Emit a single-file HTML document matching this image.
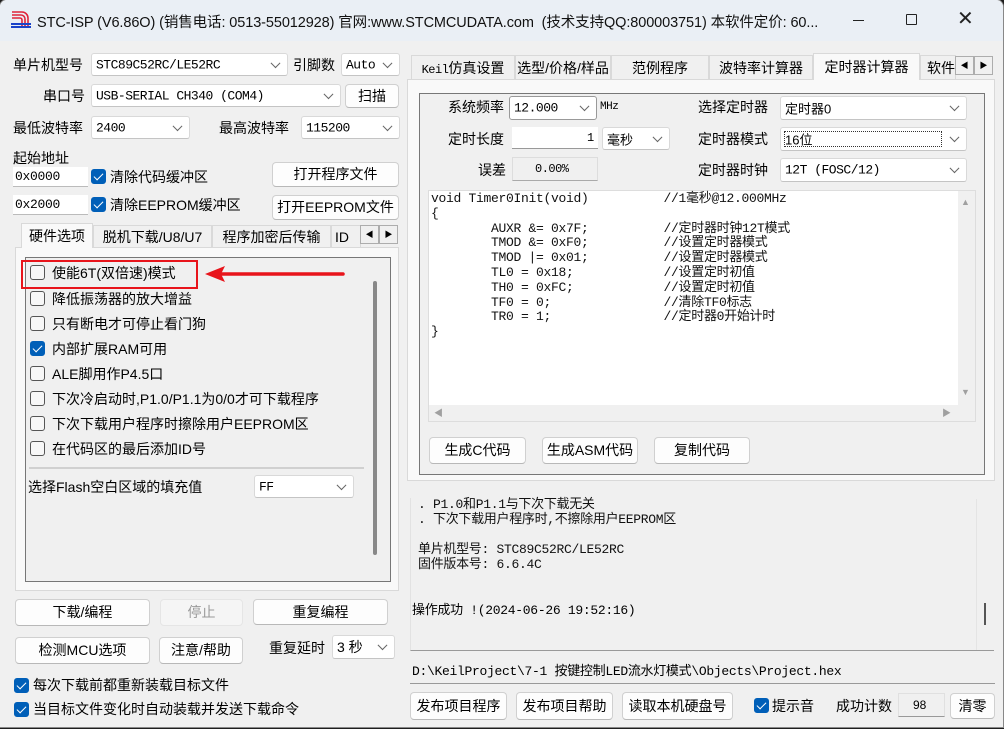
<!DOCTYPE html>
<html><head><meta charset="utf-8"><style>
*{box-sizing:border-box;margin:0;padding:0}
body{width:1004px;height:729px;background:#1e1e1e;position:relative;overflow:hidden;font-family:"Liberation Sans","Noto Sans CJK SC",sans-serif;font-size:14px;color:#000}
.win{position:absolute;left:-1px;top:-1px;width:1005px;height:729px;background:#f0f0f0;border:1px solid #888;border-radius:8px 8px 0 0;overflow:hidden}
.a{position:absolute;white-space:nowrap}
pre.a{white-space:pre}
.t{position:absolute;white-space:nowrap;line-height:16px}
.m{font-family:"Liberation Mono","Noto Sans CJK SC",monospace;font-size:12px;letter-spacing:-0.5px}
.m2{font-family:"Liberation Mono","Noto Sans CJK SC",monospace;font-size:13px;letter-spacing:-0.3px}
.cb{position:absolute;background:#fff;border:1px solid #d9d9d9;border-radius:3px;border-bottom-color:#c4c4c4}
.cb .v{position:absolute;left:4px;top:50%;transform:translateY(-50%);font-size:13px}
.cb .dd{position:absolute;right:8px;top:50%;width:7px;height:7px;border-right:1px solid #666;border-bottom:1px solid #666;transform:translateY(-75%) rotate(45deg)}
.btn{position:absolute;background:#fdfdfd;border:1px solid #d0d0d0;border-bottom-color:#b8b8b8;border-radius:4px;text-align:center;font-size:14px}
.chk{position:absolute;width:15px;height:15px;border:1px solid #555;border-radius:3px;background:#f7f7f7}
.chk.on{background:#005fb8;border-color:#005fb8}
.chk.on:after{content:"";position:absolute;left:4px;top:1px;width:4px;height:8px;border-right:1.5px solid #fff;border-bottom:1.5px solid #fff;transform:rotate(45deg)}
.tab{position:absolute;background:#f0f0f0;border:1px solid #d9d9d9;border-bottom:none;text-align:center;font-size:14px;line-height:24px}
.tab.act{background:#f9f9f9;z-index:2}
.arr{position:absolute;width:19px;height:19px;background:#f0f0f0;border:1px solid #adadad;font-size:8px;text-align:center;line-height:17px}
</style></head><body>
<div class="win">
<div class="a" style="left:0;top:0;width:1005px;height:41px;background:#eaeff5"></div>
<svg class="a" style="left:10px;top:9px" width="22" height="20" viewBox="0 0 22 20"><path d="M2 3h10a6 6 0 0 1 6 6v9M2 6h9a4 4 0 0 1 4 4v8M2 9h8a2 2 0 0 1 2 2v7" stroke="#e0233a" stroke-width="1.6" fill="none"/><path d="M1 15h20M1 18h20" stroke="#1b43c9" stroke-width="2"/></svg>
<div class="a" style="left:37px;top:11px;font-size:14.5px;color:#111;letter-spacing:-0.1px">STC-ISP (V6.86O) (销售电话: 0513-55012928) 官网:www.STCMCUDATA.com &nbsp;(技术支持QQ:800003751) 本软件定价: 60...</div>
<div class="a" style="left:853px;top:20px;width:11px;height:1px;background:#222"></div>
<div class="a" style="left:906px;top:14px;width:11px;height:11px;border:1px solid #222;border-radius:1px"></div>
<div class="a" style="left:957px;top:7px;font-size:20px;color:#222;line-height:24px">✕</div>

<!-- LEFT -->
<div class="t" style="left:13px;top:57px">单片机型号</div>
<div class="cb" style="left:91px;top:53px;width:197px;height:23px"><span class="v m">STC89C52RC/LE52RC</span><span class="dd"></span></div>
<div class="t" style="left:293px;top:57px">引脚数</div>
<div class="cb" style="left:341px;top:53px;width:59px;height:23px"><span class="v m">Auto</span><span class="dd"></span></div>
<div class="t" style="left:43px;top:88px">串口号</div>
<div class="cb" style="left:91px;top:84px;width:250px;height:23px"><span class="v m">USB-SERIAL CH340 (COM4)</span><span class="dd"></span></div>
<div class="btn" style="left:345px;top:84px;width:54px;height:24px;line-height:22px">扫描</div>
<div class="t" style="left:13px;top:120px">最低波特率</div>
<div class="cb" style="left:91px;top:116px;width:99px;height:23px"><span class="v m">2400</span><span class="dd"></span></div>
<div class="t" style="left:219px;top:120px">最高波特率</div>
<div class="cb" style="left:301px;top:116px;width:99px;height:23px"><span class="v m">115200</span><span class="dd"></span></div>
<div class="t" style="left:13px;top:150px">起始地址</div>
<div class="a" style="left:13px;top:167px;width:75px;height:20px;background:#fff;border-bottom:1px solid #bbb"></div><div class="t m2" style="left:15px;top:169px">0x0000</div>
<div class="chk on" style="left:91px;top:169px"></div><div class="t" style="left:110px;top:169px">清除代码缓冲区</div>
<div class="btn" style="left:272px;top:162px;width:127px;height:25px;line-height:23px">打开程序文件</div>
<div class="a" style="left:13px;top:195px;width:75px;height:20px;background:#fff;border-bottom:1px solid #bbb"></div><div class="t m2" style="left:15px;top:197px">0x2000</div>
<div class="chk on" style="left:91px;top:197px"></div><div class="t" style="left:110px;top:197px">清除EEPROM缓冲区</div>
<div class="btn" style="left:272px;top:195px;width:127px;height:25px;line-height:23px">打开EEPROM文件</div>
<div class="a" style="left:15px;top:247px;width:384px;height:344px;background:#f9f9f9;border:1px solid #d9d9d9"></div>
<div class="tab act" style="left:21px;top:223px;width:72px;height:25px">硬件选项</div>
<div class="tab" style="left:93px;top:225px;width:119px;height:22px;line-height:22px">脱机下载/U8/U7</div>
<div class="tab" style="left:212px;top:225px;width:119px;height:22px;line-height:22px">程序加密后传输</div>
<div class="tab" style="left:331px;top:225px;width:30px;height:22px;line-height:22px;overflow:hidden;text-align:left;padding-left:3px">ID号</div>
<div class="arr" style="left:360px;top:225px">◀</div><div class="arr" style="left:379px;top:225px">▶</div>
<div class="a" style="left:25px;top:257px;width:366px;height:325px;border:1px solid #777;background:#f0f0f0"></div>
<div class="a" style="left:373px;top:281px;width:4px;height:274px;background:#888;border-radius:2px"></div>
<div class="chk" style="left:30px;top:265px"></div><div class="t" style="left:52px;top:265px">使能6T(双倍速)模式</div>
<div class="chk" style="left:30px;top:291px"></div><div class="t" style="left:52px;top:291px">降低振荡器的放大增益</div>
<div class="chk" style="left:30px;top:316px"></div><div class="t" style="left:52px;top:316px">只有断电才可停止看门狗</div>
<div class="chk on" style="left:30px;top:341px"></div><div class="t" style="left:52px;top:341px">内部扩展RAM可用</div>
<div class="chk" style="left:30px;top:366px"></div><div class="t" style="left:52px;top:366px">ALE脚用作P4.5口</div>
<div class="chk" style="left:30px;top:391px"></div><div class="t" style="left:52px;top:391px">下次冷启动时,P1.0/P1.1为0/0才可下载程序</div>
<div class="chk" style="left:30px;top:416px"></div><div class="t" style="left:52px;top:416px">下次下载用户程序时擦除用户EEPROM区</div>
<div class="chk" style="left:30px;top:441px"></div><div class="t" style="left:52px;top:441px">在代码区的最后添加ID号</div>
<div class="a" style="left:29px;top:467px;width:335px;height:2px;background:#d0d0d0"></div>
<div class="t" style="left:28px;top:479px">选择Flash空白区域的填充值</div>
<div class="cb" style="left:254px;top:475px;width:100px;height:23px"><span class="v m">FF</span><span class="dd"></span></div>
<div class="a" style="left:21px;top:260px;width:177px;height:29px;border:2px solid #e8141b"></div>
<svg class="a" style="left:201px;top:263px" width="145" height="22"><path d="M142 11H20" stroke="#e8141b" stroke-width="3.5" stroke-linecap="round"/><path d="M4 11L24 3L20 11L24 19Z" fill="#e8141b"/></svg>
<div class="btn" style="left:15px;top:599px;width:135px;height:27px;line-height:25px">下载/编程</div>
<div class="btn" style="left:160px;top:599px;width:83px;height:27px;line-height:25px;background:#f5f5f5;color:#999;border-color:#e5e5e5">停止</div>
<div class="btn" style="left:253px;top:599px;width:135px;height:26px;line-height:24px">重复编程</div>
<div class="btn" style="left:15px;top:637px;width:135px;height:27px;line-height:25px">检测MCU选项</div>
<div class="btn" style="left:159px;top:637px;width:84px;height:27px;line-height:25px">注意/帮助</div>
<div class="t" style="left:269px;top:640px">重复延时</div>
<div class="cb" style="left:332px;top:635px;width:63px;height:24px"><span class="v" style="font-size:14px">3 秒</span><span class="dd"></span></div>
<div class="chk on" style="left:14px;top:678px"></div><div class="t" style="left:33px;top:677px">每次下载前都重新装载目标文件</div>
<div class="chk on" style="left:14px;top:702px"></div><div class="t" style="left:33px;top:701px">当目标文件变化时自动装载并发送下载命令</div>

<!-- RIGHT -->
<div class="a" style="left:407px;top:79px;width:588px;height:402px;background:#f9f9f9;border:1px solid #d9d9d9"></div>
<div class="tab" style="left:411px;top:55px;width:104px;height:24px"><span class="m">Keil</span>仿真设置</div>
<div class="tab" style="left:515px;top:55px;width:96px;height:24px">选型/价格/样品</div>
<div class="tab" style="left:611px;top:55px;width:98px;height:24px">范例程序</div>
<div class="tab" style="left:709px;top:55px;width:104px;height:24px">波特率计算器</div>
<div class="tab act" style="left:813px;top:53px;width:107px;height:27px;line-height:26px">定时器计算器</div>
<div class="tab" style="left:920px;top:55px;width:36px;height:24px;overflow:hidden;text-align:left;padding-left:6px">软件</div>
<div class="arr" style="left:955px;top:56px">◀</div><div class="arr" style="left:974px;top:56px">▶</div>
<div class="a" style="left:419px;top:93px;width:566px;height:382px;border:1px solid #777;background:#f0f0f0"></div>
<div class="t" style="left:448px;top:99px">系统频率</div>
<div class="cb" style="left:509px;top:96px;width:88px;height:24px;border-color:#999"><span class="v m">12.000</span><span class="dd"></span></div>
<div class="t m" style="left:600px;top:99px;font-size:11px">MHz</div>
<div class="t" style="left:698px;top:99px">选择定时器</div>
<div class="cb" style="left:780px;top:96px;width:187px;height:24px"><span class="v">定时器0</span><span class="dd"></span></div>
<div class="t" style="left:448px;top:131px">定时长度</div>
<div class="a" style="left:512px;top:127px;width:86px;height:22px;background:#fff;border-bottom:1px solid #999"></div><div class="t m" style="left:587px;top:130px">1</div>
<div class="cb" style="left:602px;top:127px;width:68px;height:23px"><span class="v">毫秒</span><span class="dd"></span></div>
<div class="t" style="left:698px;top:131px">定时器模式</div>
<div class="cb" style="left:780px;top:127px;width:187px;height:24px"><span class="a" style="left:3px;top:3px;width:158px;height:16px;border:1px dotted #333"></span><span class="v">16位</span><span class="dd"></span></div>
<div class="t" style="left:478px;top:162px">误差</div>
<div class="a" style="left:512px;top:157px;width:86px;height:24px;background:#f0f0f0;border:1px solid #ddd;border-bottom-color:#aaa"></div><div class="t m" style="left:535px;top:161px">0.00%</div>
<div class="t" style="left:698px;top:162px">定时器时钟</div>
<div class="cb" style="left:780px;top:158px;width:187px;height:24px"><span class="v m">12T (FOSC/12)</span><span class="dd"></span></div>
<div class="a" style="left:428px;top:190px;width:548px;height:232px;background:#fff;border:1px solid #ddd"></div>
<div class="a" style="left:958px;top:191px;width:17px;height:215px;background:#f0f0f0"></div>
<div class="a" style="left:429px;top:405px;width:546px;height:16px;background:#f0f0f0"></div>
<div class="a" style="left:961px;top:197px;font-size:9px;color:#a0a0a0">▲</div>
<div class="a" style="left:961px;top:387px;font-size:9px;color:#a0a0a0">▼</div>
<div class="a" style="left:434px;top:406px;font-size:9px;color:#a0a0a0">◀</div>
<div class="a" style="left:942px;top:406px;font-size:9px;color:#a0a0a0">▶</div>
<pre class="a m2" style="left:431px;top:192px;line-height:14.8px;color:#111">void Timer0Init(void)          //1毫秒@12.000MHz
{
        AUXR &amp;= 0x7F;          //定时器时钟12T模式
        TMOD &amp;= 0xF0;          //设置定时器模式
        TMOD |= 0x01;          //设置定时器模式
        TL0 = 0x18;            //设置定时初值
        TH0 = 0xFC;            //设置定时初值
        TF0 = 0;               //清除TF0标志
        TR0 = 1;               //定时器0开始计时
}</pre>
<div class="btn" style="left:429px;top:437px;width:97px;height:27px;line-height:25px">生成C代码</div>
<div class="btn" style="left:542px;top:437px;width:96px;height:27px;line-height:25px">生成ASM代码</div>
<div class="btn" style="left:654px;top:437px;width:96px;height:27px;line-height:25px">复制代码</div>
<div class="a" style="left:410px;top:498px;width:584px;height:153px;background:#f0f0f0;border-left:1px solid #e2e2e2;border-bottom:1px solid #999"></div>
<div class="a" style="left:976px;top:499px;width:1px;height:151px;background:#e4e4e4"></div>
<div class="a" style="left:984px;top:603px;width:2px;height:22px;background:#555"></div>
<pre class="a m2" style="left:418px;top:497px;line-height:15px;color:#111">. P1.0和P1.1与下次下载无关
. 下次下载用户程序时,不擦除用户EEPROM区

单片机型号: STC89C52RC/LE52RC
固件版本号: 6.6.4C</pre>
<div class="t m2" style="left:412px;top:603px">操作成功 !(2024-06-26 19:52:16)</div>
<div class="a" style="left:410px;top:661px;width:585px;height:23px;background:#f0f0f0;border-bottom:1px solid #999"></div>
<div class="t m2" style="left:412px;top:664px">D:\KeilProject\7-1 按键控制LED流水灯模式\Objects\Project.hex</div>
<div class="btn" style="left:410px;top:692px;width:97px;height:28px;line-height:26px">发布项目程序</div>
<div class="btn" style="left:516px;top:692px;width:97px;height:28px;line-height:26px">发布项目帮助</div>
<div class="btn" style="left:622px;top:692px;width:111px;height:28px;line-height:26px">读取本机硬盘号</div>
<div class="chk on" style="left:754px;top:698px"></div><div class="t" style="left:772px;top:698px">提示音</div>
<div class="t" style="left:836px;top:698px">成功计数</div>
<div class="a" style="left:898px;top:693px;width:47px;height:24px;background:#f0f0f0;border:1px solid #e0e0e0;border-bottom-color:#999"></div><div class="t" style="left:913px;top:697px;font-size:12px">98</div>
<div class="btn" style="left:950px;top:693px;width:45px;height:26px;line-height:24px">清零</div>
</div>
</body></html>
